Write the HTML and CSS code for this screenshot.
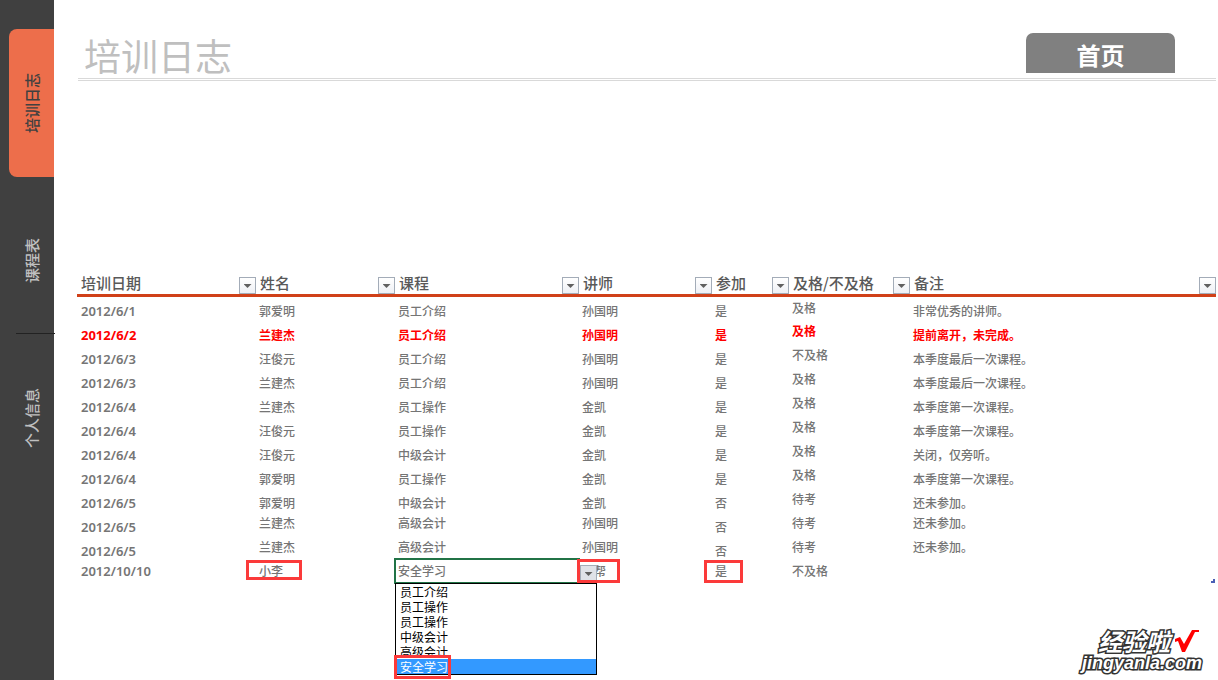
FILE: index.html
```html
<!DOCTYPE html>
<html lang="zh-CN">
<head>
<meta charset="utf-8">
<title>培训日志</title>
<link rel="stylesheet" href="styles.css">
</head>
<body>
<div class="app">
  <nav class="sidebar">
    <a class="tab tab-active" href="#log"><span class="tab-text">培训日志</span></a>
    <a class="tab tab-courses" href="#courses"><span class="tab-text">课程表</span></a>
    <a class="tab tab-people" href="#people"><span class="tab-text">个人信息</span></a>
  </nav>
  <main class="sheet">
    <header class="header">
      <h1 class="title">培训日志</h1>
      <a class="home" href="#home">首页</a>
    </header>
    <div class="log">
      <table class="table">
        <colgroup>
          <col class="c-date"><col class="c-name"><col class="c-course"><col class="c-teacher"><col class="c-attend"><col class="c-pass"><col>
        </colgroup>
        <thead>
          <tr>
            <th><div class="head">培训日期<button class="arrow" aria-label="筛选培训日期"></button></div></th>
            <th><div class="head">姓名<button class="arrow" aria-label="筛选姓名"></button></div></th>
            <th><div class="head">课程<button class="arrow" aria-label="筛选课程"></button></div></th>
            <th><div class="head">讲师<button class="arrow" aria-label="筛选讲师"></button></div></th>
            <th><div class="head">参加<button class="arrow" aria-label="筛选参加"></button></div></th>
            <th><div class="head">及格/不及格<button class="arrow" aria-label="筛选及格"></button></div></th>
            <th><div class="head">备注<button class="arrow" aria-label="筛选备注"></button></div></th>
          </tr>
        </thead>
        <tbody>
          <tr><td class="date">2012/6/1</td><td>郭爱明</td><td>员工介绍</td><td>孙国明</td><td>是</td><td class="mid">及格</td><td>非常优秀的讲师。</td></tr>
          <tr class="alert"><td class="date">2012/6/2</td><td>兰建杰</td><td>员工介绍</td><td>孙国明</td><td>是</td><td class="mid">及格</td><td>提前离开，未完成。</td></tr>
          <tr><td class="date">2012/6/3</td><td>汪俊元</td><td>员工介绍</td><td>孙国明</td><td>是</td><td class="mid">不及格</td><td>本季度最后一次课程。</td></tr>
          <tr><td class="date">2012/6/3</td><td>兰建杰</td><td>员工介绍</td><td>孙国明</td><td>是</td><td class="mid">及格</td><td>本季度最后一次课程。</td></tr>
          <tr><td class="date">2012/6/4</td><td>兰建杰</td><td>员工操作</td><td>金凯</td><td>是</td><td class="mid">及格</td><td>本季度第一次课程。</td></tr>
          <tr><td class="date">2012/6/4</td><td>汪俊元</td><td>员工操作</td><td>金凯</td><td>是</td><td class="mid">及格</td><td>本季度第一次课程。</td></tr>
          <tr><td class="date">2012/6/4</td><td>汪俊元</td><td>中级会计</td><td>金凯</td><td>是</td><td class="mid">及格</td><td>关闭，仅旁听。</td></tr>
          <tr><td class="date">2012/6/4</td><td>郭爱明</td><td>员工操作</td><td>金凯</td><td>是</td><td class="mid">及格</td><td>本季度第一次课程。</td></tr>
          <tr><td class="date">2012/6/5</td><td>郭爱明</td><td>中级会计</td><td>金凯</td><td>否</td><td class="mid">待考</td><td>还未参加。</td></tr>
          <tr><td class="date">2012/6/5</td><td class="mid">兰建杰</td><td class="mid">高级会计</td><td class="mid">孙国明</td><td>否</td><td class="mid">待考</td><td class="mid">还未参加。</td></tr>
          <tr><td class="date">2012/6/5</td><td class="mid">兰建杰</td><td class="mid">高级会计</td><td class="mid">孙国明</td><td>否</td><td class="mid">待考</td><td class="mid">还未参加。</td></tr>
          <tr class="entry">
            <td class="date">2012/10/10</td>
            <td>小李<span class="mark mark-name"></span></td>
            <td class="editing">安全学习
              <button class="arrow arrow-open" aria-label="选择课程" aria-expanded="true"></button>
              <div class="menu" role="listbox" aria-label="课程">
                <button class="option" role="option">员工介绍</button>
                <button class="option" role="option">员工操作</button>
                <button class="option" role="option">员工操作</button>
                <button class="option" role="option">中级会计</button>
                <button class="option" role="option">高级会计</button>
                <button class="option option-selected" role="option" aria-selected="true">安全学习</button>
                <span class="mark mark-option"></span>
              </div>
            </td>
            <td>小帮<span class="mark mark-teacher"></span></td>
            <td>是<span class="mark mark-attend"></span></td>
            <td>不及格</td>
            <td></td>
          </tr>
        </tbody>
      </table>
      <span class="resize"></span>
    </div>
  </main>
  <div class="brand">
    <div class="brand-name">经验啦
      <svg class="check" viewBox="0 0 24 24" aria-hidden="true"><path d="M0 10L5 8L9 15L17 1H24V3H20L10 23H7L3 12L0 13Z" fill="#ff0000"/></svg>
    </div>
    <div class="brand-site">jingyanla.com</div>
  </div>
</div>
</body>
</html>
```

FILE: styles.css
```css
* {
  box-sizing: border-box;
}

body {
  margin: 0;
  background: #ffffff;
  color: #757575;
  font-family: "Noto Sans CJK SC", sans-serif;
  font-size: 12px;
  line-height: 16px;
}

button {
  margin: 0;
  padding: 0;
  font: inherit;
}

a {
  text-decoration: none;
}

.app {
  position: relative;
  display: flex;
  min-height: 100vh;
  overflow: hidden;
}

/* Side tabs */
.sidebar {
  display: flex;
  flex-direction: column;
  flex: none;
  width: 54px;
  padding-top: 29px;
  background: #404040;
}

.tab {
  display: flex;
  align-items: center;
  justify-content: center;
  height: 148px;
  margin-left: 9px;
  padding-left: 1px;
  color: #bfbfbf;
  font-size: 15px;
  font-weight: 500;
  line-height: 20px;
}

.tab-active {
  border-radius: 8px 0 0 8px;
  background: #ed6e4b;
  color: #404040;
}

.tab-courses {
  height: 146px;
  margin: 11px -1px 0 16px;
  padding: 0 7px 0 0;
  border-bottom: 1px solid #222222;
}

.tab-people {
  height: 168px;
}

.tab-text {
  writing-mode: vertical-rl;
  text-orientation: sideways;
  transform: rotate(180deg);
}

/* Sheet */
.sheet {
  flex: 1;
  min-width: 0;
  padding: 33px 2px 0 23px;
}

.header {
  display: flex;
  align-items: flex-start;
  justify-content: space-between;
  height: 48px;
  margin-left: 1px;
  padding-right: 41px;
  border-bottom: 3px double #d9d9d9;
}

.title {
  margin: 0 0 0 6px;
  color: #bfbfbf;
  font-size: 37px;
  font-weight: 400;
  line-height: 45px;
}

.home {
  width: 149px;
  height: 40px;
  border-radius: 7px 7px 0 0;
  background: #808080;
  color: #ffffff;
  font-size: 24px;
  font-weight: 700;
  line-height: 44px;
  text-align: center;
}

.log {
  position: relative;
  margin-top: 192px;
}

.table {
  width: 100%;
  border-spacing: 0;
  table-layout: fixed;
}

.c-date { width: 179px; }
.c-name { width: 139px; }
.c-course { width: 184px; }
.c-teacher { width: 133px; }
.c-attend { width: 77px; }
.c-pass { width: 121px; }

th {
  height: 24px;
  padding: 0 0 0 4px;
  border-bottom: 3px solid #d04018;
  color: #595959;
  font-size: 15px;
  font-weight: 500;
  line-height: 22px;
  text-align: left;
}

.head {
  display: flex;
  align-items: flex-end;
  justify-content: space-between;
  height: 21px;
}

.arrow {
  width: 17px;
  height: 17px;
  border: 1px solid #a3acb8;
  background: linear-gradient(#ffffff, #eef0f5);
}

.arrow::before {
  content: "";
  display: block;
  width: 8px;
  height: 4px;
  margin: 1px auto 0;
  background: #606060;
  clip-path: polygon(0 0, 100% 0, 50% 100%);
}

td {
  position: relative;
  height: 24px;
  padding: 0 0 0 3px;
  font-weight: 500;
  vertical-align: bottom;
  white-space: nowrap;
}

tbody tr:first-child td {
  height: 22px;
}

.date {
  padding-left: 4px;
  font-family: "Noto Sans", sans-serif;
  font-size: 13px;
  font-weight: 600;
}

.mid,
.entry td {
  vertical-align: middle;
}

.alert td {
  color: #ff0000;
  font-weight: 700;
}

.editing {
  z-index: 1;
  outline: 2px solid #217346;
  outline-offset: -1px;
}

.arrow-open {
  position: absolute;
  top: 6px;
  left: 185px;
  background: #dfe2e8;
}

.menu {
  position: absolute;
  top: 24px;
  left: 0;
  display: flex;
  flex-direction: column;
  width: 202px;
  border: 1px solid #000000;
  background: #ffffff;
}

.option {
  height: 15px;
  padding-left: 4px;
  border: 0;
  background: #ffffff;
  color: #000000;
  font-weight: 400;
  line-height: 14px;
  text-align: left;
}

.option-selected {
  background: #3399ff;
  color: #ffffff;
}

/* Red highlight frames */
.mark {
  position: absolute;
  z-index: 2;
  border: 3px solid #fb3a3a;
  pointer-events: none;
}

.mark-name {
  top: 1px;
  left: -10px;
  width: 56px;
  height: 20px;
}

.mark-teacher {
  top: 0;
  left: -2px;
  width: 43px;
  height: 24px;
}

.mark-attend {
  top: 1px;
  left: -8px;
  width: 39px;
  height: 23px;
}

.mark-option {
  bottom: -5px;
  left: -2px;
  width: 57px;
  height: 24px;
}

.resize {
  position: absolute;
  right: 1px;
  bottom: 0;
  width: 4px;
  height: 4px;
  background: #4a5fb5;
  clip-path: polygon(50% 0, 100% 0, 100% 100%, 0 100%, 0 50%, 50% 50%);
}

/* Site badge */
.brand {
  position: absolute;
  right: 16px;
  bottom: 7px;
  color: #ffffff;
  font-weight: 700;
  -webkit-text-stroke: 3px #333333;
  paint-order: stroke fill;
}

.brand-name {
  display: flex;
  align-items: center;
  gap: 5px;
  padding-left: 16px;
  font-size: 24px;
  font-style: italic;
  line-height: 24px;
}

.check {
  width: 24px;
  height: 24px;
}

.brand-site {
  font-family: "Liberation Sans", sans-serif;
  font-size: 18px;
  font-style: italic;
  line-height: 20px;
}
```
